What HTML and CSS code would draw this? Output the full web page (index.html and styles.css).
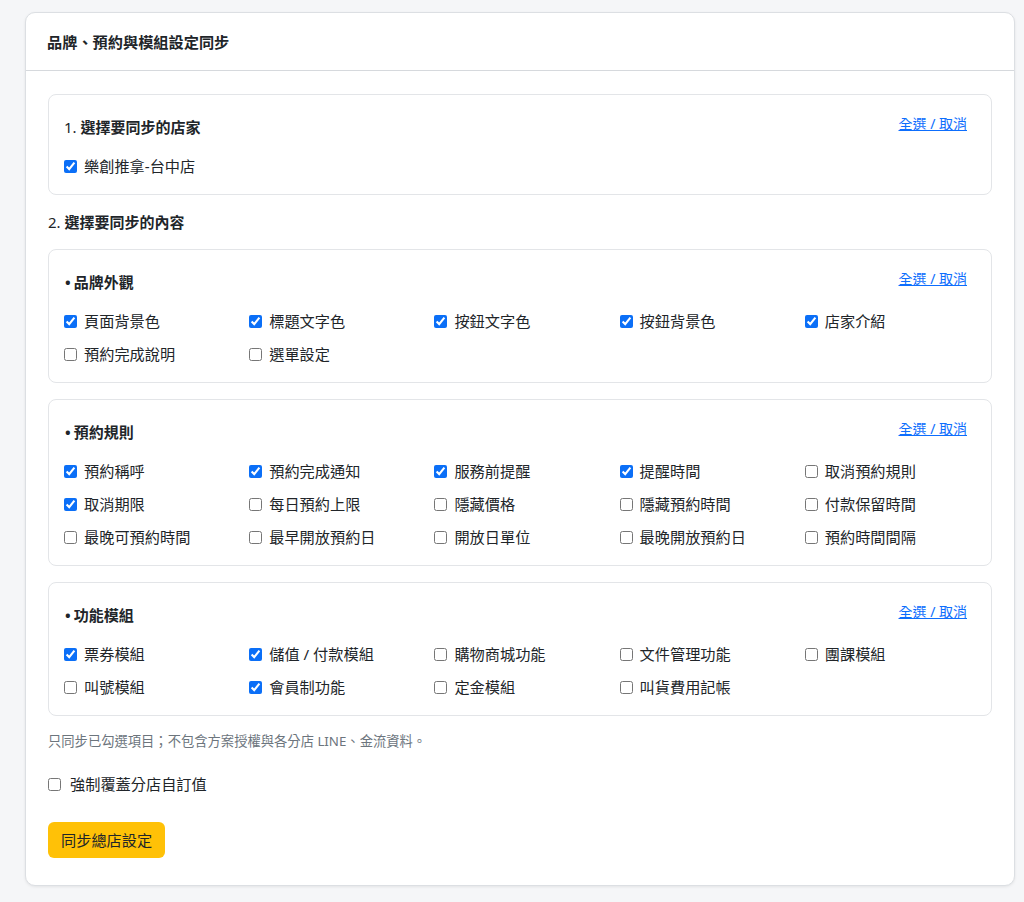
FILE: index.html
```html
<!DOCTYPE html>
<html lang="zh-Hant">

<head>
  <meta charset="UTF-8">
  <meta name="viewport" content="width=device-width, initial-scale=1.0">
  <title>品牌、預約與模組設定同步</title>
  <link rel="stylesheet" href="styles.css">
</head>

<body>
  <div class="card">
    <div class="cardHeader">品牌、預約與模組設定同步</div>

    <div class="cardBody">
      <div class="syncBox">
        <div class="boxHead">
          <div class="boxTitle"><span class="num">1.</span> 選擇要同步的店家</div>
          <a href="#" class="toggleAll">全選 / 取消</a>
        </div>
        <div class="optGrid">
          <label class="opt"><input type="checkbox" checked> 樂創推拿-台中店</label>
        </div>
      </div>

      <div class="stepTitle"><span class="num">2.</span> 選擇要同步的內容</div>

      <div class="syncBox">
        <div class="boxHead">
          <div class="boxTitle"><span class="bullet">•</span>品牌外觀</div>
          <a href="#" class="toggleAll">全選 / 取消</a>
        </div>
        <div class="optGrid">
          <label class="opt"><input type="checkbox" checked> 頁面背景色</label>
          <label class="opt"><input type="checkbox" checked> 標題文字色</label>
          <label class="opt"><input type="checkbox" checked> 按鈕文字色</label>
          <label class="opt"><input type="checkbox" checked> 按鈕背景色</label>
          <label class="opt"><input type="checkbox" checked> 店家介紹</label>
          <label class="opt"><input type="checkbox"> 預約完成說明</label>
          <label class="opt"><input type="checkbox"> 選單設定</label>
        </div>
      </div>

      <div class="syncBox">
        <div class="boxHead">
          <div class="boxTitle"><span class="bullet">•</span>預約規則</div>
          <a href="#" class="toggleAll">全選 / 取消</a>
        </div>
        <div class="optGrid">
          <label class="opt"><input type="checkbox" checked> 預約稱呼</label>
          <label class="opt"><input type="checkbox" checked> 預約完成通知</label>
          <label class="opt"><input type="checkbox" checked> 服務前提醒</label>
          <label class="opt"><input type="checkbox" checked> 提醒時間</label>
          <label class="opt"><input type="checkbox"> 取消預約規則</label>
          <label class="opt"><input type="checkbox" checked> 取消期限</label>
          <label class="opt"><input type="checkbox"> 每日預約上限</label>
          <label class="opt"><input type="checkbox"> 隱藏價格</label>
          <label class="opt"><input type="checkbox"> 隱藏預約時間</label>
          <label class="opt"><input type="checkbox"> 付款保留時間</label>
          <label class="opt"><input type="checkbox"> 最晚可預約時間</label>
          <label class="opt"><input type="checkbox"> 最早開放預約日</label>
          <label class="opt"><input type="checkbox"> 開放日單位</label>
          <label class="opt"><input type="checkbox"> 最晚開放預約日</label>
          <label class="opt"><input type="checkbox"> 預約時間間隔</label>
        </div>
      </div>

      <div class="syncBox">
        <div class="boxHead">
          <div class="boxTitle"><span class="bullet">•</span>功能模組</div>
          <a href="#" class="toggleAll">全選 / 取消</a>
        </div>
        <div class="optGrid">
          <label class="opt"><input type="checkbox" checked> 票券模組</label>
          <label class="opt"><input type="checkbox" checked> 儲值 / 付款模組</label>
          <label class="opt"><input type="checkbox"> 購物商城功能</label>
          <label class="opt"><input type="checkbox"> 文件管理功能</label>
          <label class="opt"><input type="checkbox"> 團課模組</label>
          <label class="opt"><input type="checkbox"> 叫號模組</label>
          <label class="opt"><input type="checkbox" checked> 會員制功能</label>
          <label class="opt"><input type="checkbox"> 定金模組</label>
          <label class="opt"><input type="checkbox"> 叫貨費用記帳</label>
        </div>
      </div>

      <div class="note">只同步已勾選項目；不包含方案授權與各分店 LINE、金流資料。</div>

      <label class="opt forceOpt"><input type="checkbox"> 強制覆蓋分店自訂值</label>

      <button class="syncButton">同步總店設定</button>
    </div>
  </div>
</body>

</html>
```

FILE: styles.css
```css
body {
  font-family: "Noto Sans", "Noto Sans CJK TC", sans-serif;
  background-color: #f5f6f8;
  color: #212529;
  margin: 0;
  padding: 12px 9px 17px 25px;
}

.card {
  background: #fff;
  border: 1px solid #dcdfe3;
  border-radius: 10px;
  box-shadow: 0 1px 3px rgba(0, 0, 0, 0.08);
}

.cardHeader {
  font-size: 15.2px;
  font-weight: 700;
  line-height: 22px;
  padding: 18px 21px 17px;
  border-bottom: 1px solid #d6d9dd;
}

.cardBody {
  padding: 23px 22px 27px;
}

.syncBox {
  border: 1px solid #e3e5e8;
  border-radius: 8px;
  padding: 15px 15px 17px;
  margin-bottom: 16px;
}

.boxHead {
  display: flex;
  justify-content: space-between;
  align-items: flex-start;
  padding-top: 4px;
}

.boxTitle,
.stepTitle {
  font-size: 15px;
  font-weight: 700;
  line-height: 22px;
}

.boxTitle {
  margin-top: 2px;
}

.bullet {
  margin: 0 3px 0 1px;
}

.num {
  font-weight: 400;
}

.stepTitle {
  margin: 0 0 16px;
}

.toggleAll {
  font-size: 14px;
  line-height: 20px;
  color: #0d6efd;
  margin-right: 9px;
}

.optGrid {
  display: grid;
  grid-template-columns: repeat(5, 1fr);
  column-gap: 14px;
  row-gap: 11px;
  margin-top: 17px;
}

.opt {
  display: flex;
  align-items: center;
  gap: 7px;
  font-size: 15.2px;
  line-height: 22px;
}

.opt input {
  margin: 0;
  width: 13px;
  height: 13px;
  accent-color: #0b6ff7;
}

.note {
  font-size: 13.3px;
  line-height: 20px;
  color: #6c757d;
  margin-top: -1px;
}

.forceOpt {
  margin-top: 22px;
  gap: 9px;
}

.syncButton {
  display: block;
  height: 36px;
  margin-top: 27px;
  font-family: inherit;
  font-size: 15.2px;
  line-height: 22px;
  color: #212529;
  background-color: #ffc107;
  border: none;
  border-radius: 6px;
  padding: 7px 13px;
  cursor: pointer;
}
```
